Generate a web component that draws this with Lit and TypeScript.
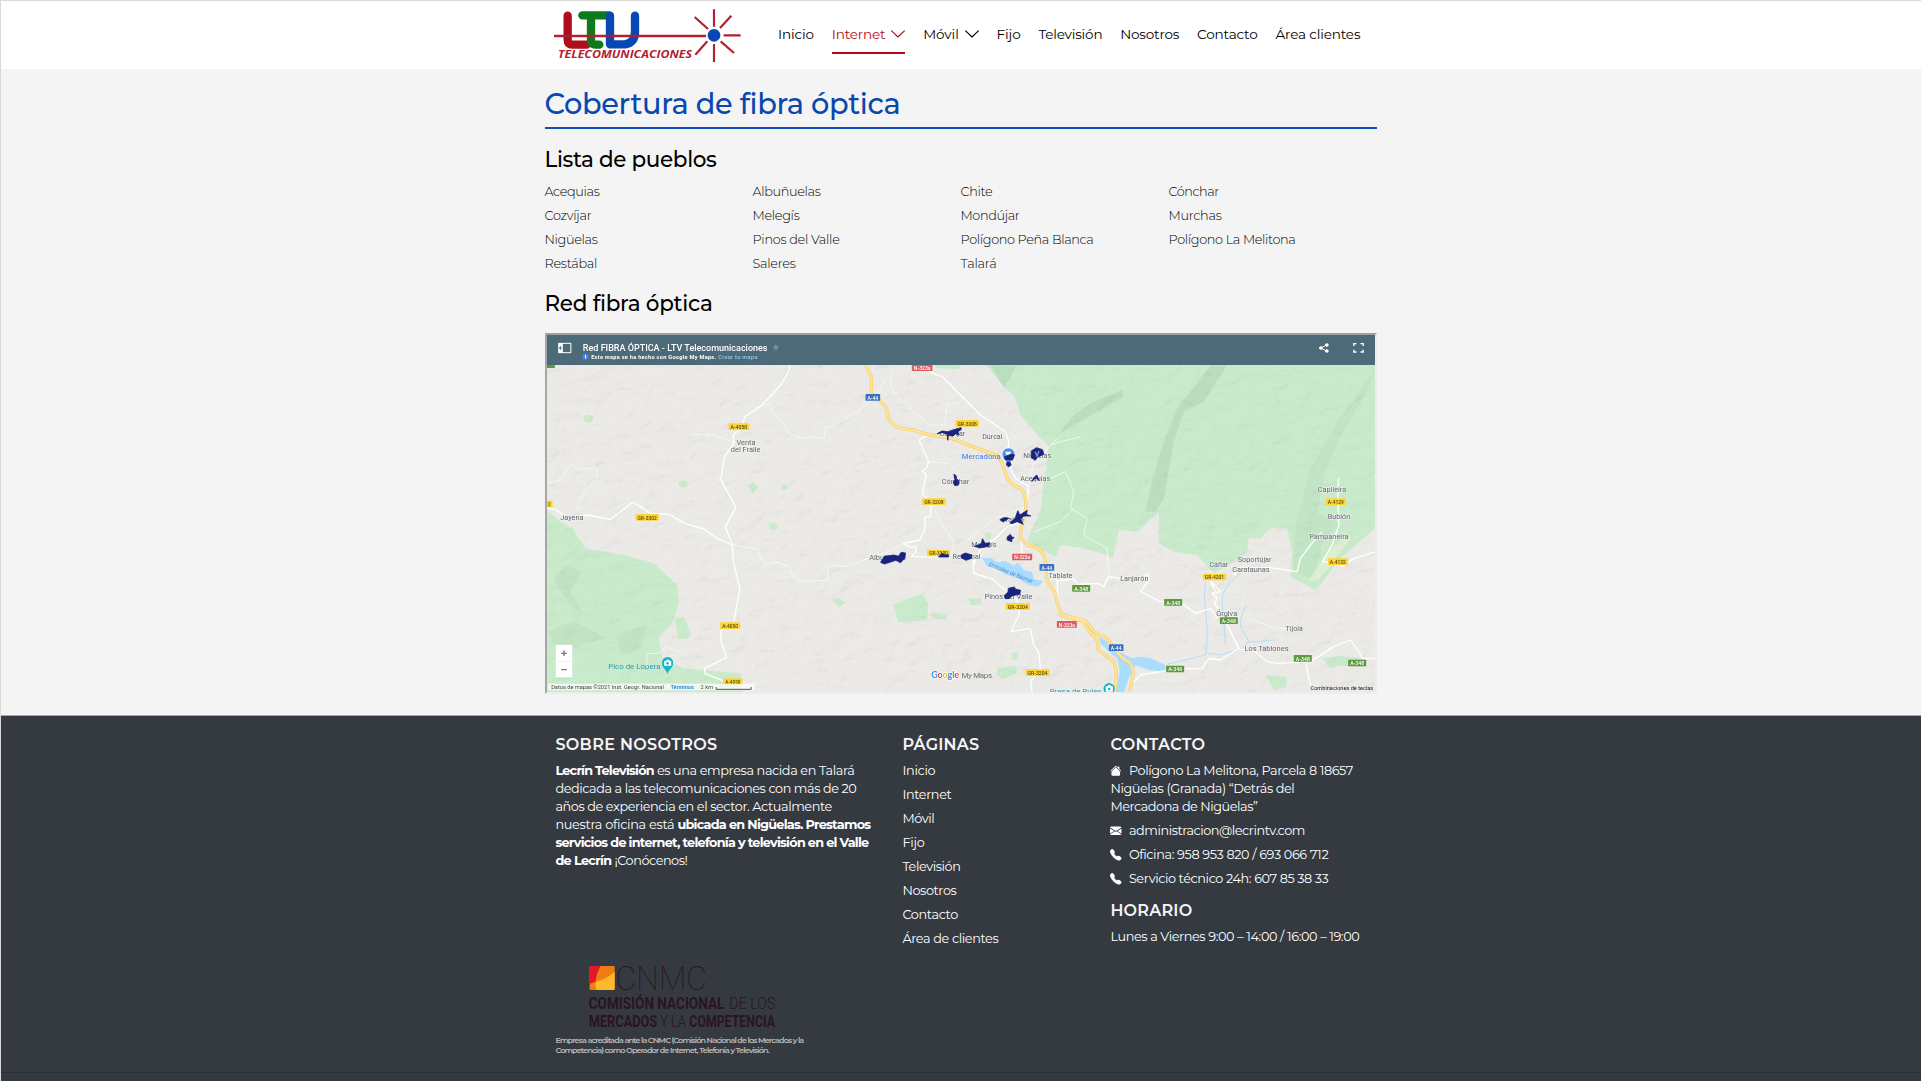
import { LitElement, html, svg, css } from "lit";
import { customElement, property } from "lit/decorators.js";

/** A run of text whose tracking is adjusted so that it spans `width` pixels. */
@customElement("ui-run")
class UiRun extends LitElement {
  @property({ type: Number }) width = 0;

  static styles = css`
    :host {
      display: inline-block;
      white-space: pre;
    }
    .run {
      display: inline-block;
    }
  `;

  firstUpdated() {
    const run = this.renderRoot.querySelector(".run") as HTMLElement;
    const natural = run.getBoundingClientRect().width;
    const count = (this.textContent ?? "").length;
    if (this.width && natural && count) {
      run.style.letterSpacing = `${(this.width - natural) / count}px`;
    }
  }

  render() {
    return html`<span class="run"><slot></slot></span>`;
  }
}

const run = (text: string, width: number) => html`<ui-run width=${width}>${text}</ui-run>`;

const chevron = html`<svg class="chevron" viewBox="0 0 14 8"><path d="M.6 .8 7 7 13.4 .8" fill="none" stroke="currentColor" stroke-width="1.1" stroke-linecap="round" stroke-linejoin="round" /></svg>`;

const house = html`<svg class="icon" viewBox="0 0 16 16" fill="currentColor"><path d="m8 3.293 6 6V13.500a1.500 1.500 0 0 1-1.500 1.500h-9A1.500 1.500 0 0 1 2 13.500V9.293l6-6zm5-.793V6l-2-2V2.500a.5.5 0 0 1 .5-.5h1a.5.5 0 0 1 .5.5z" /><path d="M7.293 1.500a1 1 0 0 1 1.414 0l6.647 6.646a.5.5 0 0 1-.708.708L8 2.207 1.354 8.854a.5.5 0 1 1-.708-.708L7.293 1.500z" /></svg>`;
const mail = html`<svg class="icon" viewBox="0 0 16 16" fill="currentColor"><path d="M.05 3.555A2 2 0 0 1 2 2h12a2 2 0 0 1 1.950 1.555L8 8.414.05 3.555zM0 4.697v7.104l5.803-3.558L0 4.697zM6.761 8.830l-6.570 4.027A2 2 0 0 0 2 14h12a2 2 0 0 0 1.808-1.144l-6.570-4.027L8 9.586l-1.239-.757zm3.436-.586L16 11.801V4.697l-5.803 3.546z" /></svg>`;
const phone = html`<svg class="icon" viewBox="0 0 16 16" fill="currentColor"><path d="M1.885.511a1.745 1.745 0 0 1 2.610.163L6.290 2.980c.329.423.445.974.315 1.494l-.547 2.190a.678.678 0 0 0 .178.643l2.457 2.457a.678.678 0 0 0 .644.178l2.189-.547a1.745 1.745 0 0 1 1.494.315l2.306 1.794c.829.645.905 1.870.163 2.611l-1.034 1.034c-.740.740-1.846 1.065-2.877.702a18.634 18.634 0 0 1-7.010-4.420 18.634 18.634 0 0 1-4.420-7.009c-.362-1.030-.037-2.137.703-2.877L1.885.511z" /></svg>`;

/* ---- map: drawn at three units per pixel ---- */

type Shield = [number, number, string, number?];
const shield = (fill: string, ink: string) => ([cx, cy, text, w = 62]: Shield) => svg`
  <rect x=${cx - w / 2} y=${cy - 10} width=${w} height="20" rx="2" fill=${fill} />
  <text x=${cx - w / 2 + 6} y=${cy + 6.5} textLength=${w - 12} lengthAdjust="spacingAndGlyphs" font-size="18" font-weight="500" fill=${ink}>${text}</text>`;

const yellowShields: Shield[] = [
  [595, 305, "A-4050"], [320, 577, "GR-3302", 70], [569, 902, "A-4050", 60], [577, 1070, "A-4050", 58],
  [1180, 530, "GR-3208", 70], [1194, 684, "GR-3300", 68], [1280, 295, "GR-3208", 70], [1432, 844, "GR-3204", 72],
  [1491, 1043, "GR-3204", 72], [2022, 756, "GR-4201", 70], [2386, 530, "A-4129", 60], [2392, 710, "A-4132", 60],
];
const greenShields: Shield[] = [
  [1622, 790, "A-348", 54], [1898, 832, "A-348", 54], [2065, 887, "A-348", 54],
  [1904, 1032, "A-346", 54], [2287, 1000, "A-348", 54], [2450, 1014, "A-348", 54],
];
const redShields: Shield[] = [[1145, 128, "N-323a"], [1445, 696, "N-323a", 60], [1579, 898, "N-323a", 60]];
const blueShields: Shield[] = [[997, 217, "A-44", 44], [1519, 727, "A-44", 44], [1727, 968, "A-44", 44]];

type Place = [number, number, number, string];
const places: Place[] = [
  [588, 645, 360, "Venta"], [571, 660, 382, "del Fraile"], [59, 129, 585, "Jayena"], [986, 1096, 704, "Albuñuelas"],
  [1204, 1286, 478, "Cónchar"], [1198, 1274, 332, "Cozvíjar"], [1236, 1320, 702, "Restábal"], [1325, 1386, 343, "Dúrcal"],
  [1448, 1532, 399, "Nigüelas"], [1439, 1529, 467, "Acequias"], [1292, 1368, 666, "Melegís"], [1392, 1450, 592, "Talará"],
  [1332, 1476, 822, "Pinos del Valle"], [1524, 1596, 758, "Tablate"], [1739, 1824, 769, "Lanjarón"],
  [2007, 2063, 725, "Cáñar"], [2092, 2193, 712, "Soportújar"], [2075, 2187, 740, "Carataunas"], [2027, 2090, 872, "Órgiva"],
  [2235, 2287, 917, "Tíjola"], [2112, 2244, 977, "Los Tablones"], [2332, 2417, 500, "Capileira"],
  [2362, 2429, 581, "Bubión"], [2306, 2424, 641, "Pampaneira"],
];

const minorRoads = [
  "M748 120C745 160 700 205 662 242L614 275 600 312 578 330 580 355 552 395 541 463 586 547 555 605 575 660 580 715 598 790 580 890",
  "M569 902 541 918 542 950 558 998 492 1030 494 1046 560 1072",
  "M20 550 45 553 80 578 140 570 210 583 278 531 330 565 385 568 440 598 490 612 530 640 575 660",
  "M1160 330 1136 345 1164 410 1158 430 1144 438 1157 448 1146 508 1172 530 1170 575 1152 578 1155 608 1138 645 1088 655 1112 668 1127 665 1126 680 1112 695 1215 697",
  "M1165 140 1205 155 1320 270 1395 320 1405 350 1400 410 1425 460 1465 485 1460 530 1440 570 1441 640 1447 700",
  "M1298 705 1300 745 1355 762 1395 795 1430 825 1436 870 1428 885 1412 920 1470 910 1478 955 1495 985 1500 1030 1470 1070 1475 1100",
  "M1300 720 1320 672 1365 640 1400 605 1440 592",
  "M1520 738 1550 765 1552 840M1550 768 1600 762 1612 778 1675 775 1690 785 1703 755 1740 760 1790 770 1822 745 1826 765 1800 800 1855 828 1930 840 1965 865 2010 850 2030 880",
  "M2010 770 2025 800 2012 770 2040 800 2015 805 2030 820 2022 835 2050 880 2095 970 2040 1005 2005 1000 1985 1030 1905 1032 1800 1050 1770 1080 1770 1100",
  "M2095 972 2145 980 2180 1010 2215 1015 2310 1010 2380 965 2430 945 2458 985 2465 1000 2510 1000M2297 1015 2305 1060 2312 1085",
  "M2394 460 2392 510 2395 600 2375 660 2345 710 2390 715 2405 725 2440 700 2508 680M2345 620 2310 660 2280 700 2270 740 2190 728 2098 728 2080 750",
];
const tracks = [
  "M20 475 60 465 90 418 115 432 170 430 172 455 140 490 105 555",
  "M662 242 690 235 695 262 725 290 745 325 780 340 815 335 850 340 855 310 890 295 950 260 1015 210 1030 165",
  "M575 660 650 672 672 720 705 710 745 725 760 760 790 770 860 765 865 720 920 725 1010 690 1060 675 1088 655",
  "M455 328 520 330 578 352M1060 140C1020 200 1100 230 1120 260L1170 300 1215 300 1218 240 1260 232",
  "M1165 410 1225 415 1260 450M1172 535 1200 590 1240 650 1238 690M318 1030 320 985 355 985 375 965 425 985",
  "M1532 360 1560 350 1620 335M1530 460 1575 440 1600 500 1590 550 1640 580 1630 630 1700 670 1705 750M1480 620 1560 590 1600 550",
  "M2127 880 2200 908 2250 912M1465 480 1478 420 1550 340M1260 660 1365 580 1465 540",
];
const motorway = "M975 120 993 155 993 205C1025 235 1042 240 1042 275 1060 325 1110 305 1140 322 1190 340 1230 330 1262 352L1370 392C1405 430 1380 470 1440 490 1480 535 1435 590 1440 640L1462 660C1515 672 1515 690 1518 745 1515 790 1545 780 1548 825L1562 870 1610 880C1650 880 1645 925 1690 935 1715 945 1730 1000 1765 1010 1790 1040 1770 1070 1768 1100";
const motorwayBranch = "M1562 872 1630 890C1640 930 1680 930 1672 975L1715 1005C1735 1030 1725 1070 1724 1100";

const zones = [
  "M1190 326 1205 318 1222 320 1246 312 1262 308 1262 314 1252 320 1256 330 1246 326 1236 334 1224 330 1222 346 1220 328 1206 323Z",
  "M1240 448 1247 452 1248 462 1254 466 1254 480 1243 482 1238 472 1243 464Z",
  "M1020 712 1032 694 1060 690 1074 694 1082 682 1095 684 1093 700 1080 713 1066 706 1032 717Z",
  "M1194 696 1204 685 1214 690 1224 689 1224 696Z",
  "M1262 690 1275 684 1294 690 1293 700 1276 706 1262 698Z",
  "M1302 664 1322 657 1326 641 1334 655 1348 653 1345 664 1318 669Z",
  "M1400 636 1410 628 1413 635 1421 638 1414 643 1414 650 1400 645Z",
  "M1378 584 1390 578 1405 580 1388 591Z",
  "M1408 594 1424 580 1432 557 1438 570 1460 556 1458 568 1471 573 1450 573 1440 582 1448 598 1430 590 1414 596Z",
  "M1391 812 1402 802 1404 790 1422 786 1424 792 1440 796 1438 808 1414 812 1406 821 1394 821Z",
  "M1392 396 1412 387 1422 390 1416 405 1394 404Z",
  "M1399 412 1408 411 1412 420 1404 426 1398 420Z",
  "M1474 470 1480 458 1489 450 1496 466 1487 460 1478 464Z",
  "M1473 398 1472 378 1488 368 1506 374 1510 388 1492 396 1484 406Z",
];

const massif = "M1338 120 1390 185 1420 210 1440 270 1500 340 1525 365 1510 470 1500 560 1470 620 1462 650 1545 695 1560 660 1620 668 1700 690 1718 700 1735 615 1790 620 1855 560 1855 655 1900 680 1970 690 2020 745 2090 705 2120 680 2125 640 2160 640 2190 610 2240 610 2255 680 2250 755 2325 795 2350 765 2400 700 2510 605 2510 120Z";
const westWoods = "M19 555 60 590 95 610 135 670 250 690 340 715 410 780 415 830 400 885 355 940 365 1000 430 1030 600 1045 605 1101 19 1101Z";

const mapCanvas = svg`
  <defs>
    <filter id="relief" x="0" y="0" width="100%" height="100%">
      <feTurbulence type="fractalNoise" baseFrequency="0.018 0.026" numOctaves="4" seed="8" />
      <feDiffuseLighting lighting-color="#fff" surfaceScale="9" diffuseConstant="1.200"><feDistantLight azimuth="225" elevation="58" /></feDiffuseLighting>
    </filter>
    <clipPath id="forests"><path d=${massif} /><path d=${westWoods} /></clipPath>
  </defs>
  <rect x="0" y="30" width="2520" height="1080" fill="#ebeae6" />
  <g fill="#c9ebcc">
    <path d=${massif} />
    <path d=${westWoods} />
    <path d="M404 880 430 876 450 925 445 940 412 942Z" />
    <ellipse cx="144" cy="281" rx="15" ry="12" /><ellipse cx="428" cy="477" rx="13" ry="11" />
    <path d="M620 482 636 472 655 486 636 502Z" /><circle cx="732" cy="486" r="9" /><ellipse cx="698" cy="604" rx="13" ry="11" />
    <path d="M872 822 895 820 915 834 895 846Z" /><path d="M1060 840 1100 822 1145 807 1163 835 1160 885 1120 888 1072 890Z" />
    <path d="M1172 865 1222 870 1215 885 1175 880ZM1284 820 1322 822 1318 838 1290 840ZM1370 1030 1425 1022 1430 1045 1390 1062 1368 1050ZM1333 625 1350 620 1352 640 1335 645ZM1412 985 1432 980 1432 1002 1415 1005Z" />
    <path d="M2345 1000 2400 992 2475 1005 2470 1025 2400 1022 2370 1030ZM2175 1050 2240 1055 2235 1085 2200 1095ZM1180 120 1262 120 1255 132 1190 130Z" />
  </g>
  <g clip-path="url(#forests)" fill="#a9cfae" opacity=".45">
    <path d="M1350 120 1425 122 1410 160 1388 188ZM1600 270 1650 235 1745 195 1750 215 1670 260 1550 330 1520 370Z" />
    <path d="M2010 122 2060 120 1990 230 1930 260 1900 350 1885 430 1870 520 1845 560 1815 560 1830 490 1860 380 1910 250Z" />
    <path d="M2508 130 2460 230 2390 350 2350 450 2330 560 2400 600 2350 640 2320 760 2260 740 2265 600 2310 430 2390 290Z" opacity=".55" />
    <path d="M40 760 75 720 120 740 90 800 130 870 80 830ZM20 920 100 890 200 940 120 960 60 1000ZM230 930 320 900 300 970 240 990Z" opacity=".5" />
  </g>
  <path d="M2400 640 2430 640 2340 760 2300 770 2350 700Z" fill="#e2efd2" opacity=".8" />
  <rect class="relief" x="19" y="30" width="2490" height="1075" filter="url(#relief)" />
  <g fill="#a9dcff">
    <path d="M1324 698 1350 700 1370 712 1395 708 1420 722 1432 712 1450 735 1475 742 1480 762 1508 768 1492 786 1465 780 1430 760 1395 748 1370 732 1340 724Z" />
    <path d="M1675 935 1700 950 1705 970 1735 980 1775 1000 1795 995 1830 1000 1875 1020 1875 1040 1825 1035 1785 1020 1765 1060 1750 1101 1725 1101 1738 1040 1730 1000 1700 975 1680 955Z" />
  </g>
  <g fill="none" stroke="#b5dcf6" stroke-width="3"><path d="M2118 840C2090 890 2100 910 2115 930L2125 950 2105 970 2040 990 2000 985M2100 745C2030 800 2045 820 2050 880L2055 960M1995 770C1985 850 2010 900 1995 990L1880 1018M2118 952 2200 945" /></g>
  <g class="track">${tracks.map((d) => svg`<path d=${d} />`)}</g>
  <g class="road">${minorRoads.map((d) => svg`<path d=${d} />`)}</g>
  <g fill="none" stroke-linejoin="round"><path d="${motorway}${motorwayBranch}" stroke="#f1cf72" stroke-width="10" /><path d="${motorway}${motorwayBranch}" stroke="#ffe499" stroke-width="6" /></g>

  <g class="places">${places.map(([x0, x1, y, name]) => svg`<text x=${x0} y=${y} textLength=${x1 - x0} lengthAdjust="spacingAndGlyphs">${name}</text>`)}</g>
  <text x="1343" y="722" class="water" textLength="142" transform="rotate(22 1343 722)">Embalse de Béznar</text>
  ${yellowShields.map(shield("#fbd53a", "#5d4a00"))}
  ${greenShields.map(shield("#5c9a3c", "#fff"))}
  ${redShields.map(shield("#df5c62", "#fff"))}
  ${blueShields.map(shield("#3c72c4", "#fff"))}
  <rect x="19" y="527" width="17" height="20" fill="#fbd53a" /><text x="21" y="543" font-size="17" fill="#6b5400">2</text>
  <rect x="19" y="120" width="24" height="9" fill="#5c9a3c" />

  <text x="1264" y="402" textLength="117" lengthAdjust="spacingAndGlyphs" font-size="24" fill="#3b80ee">Mercadona</text>
  <path d="M1404 370a18 18 0 0 1 18 18c0 14-14 18-18 34-4-16-18-20-18-34a18 18 0 0 1 18-18Z" fill="#4a8df6" /><path d="M1394 380h18l-3 10h-11z" fill="#fff" />
  <g fill="#1a237e">${zones.map((d) => svg`<path d=${d} stroke="#1a237e" stroke-width="2.500" stroke-linejoin="round" />`)}</g>
  <path d="M1484 380l6 14 5-16" fill="none" stroke="#8f93c2" stroke-width="4" />

  <text x="203" y="1031" textLength="157" lengthAdjust="spacingAndGlyphs" font-size="24" fill="#2f9dab">Pico de Lopera</text>
  <path d="M381 996a17 17 0 0 1 17 18c0 14-12 18-17 33-5-15-17-19-17-33a17 17 0 0 1 17-18Z" fill="#19b5cb" /><path d="M371 1008h5l3-4h6l3 4h4v14h-21z" fill="#fff" /><circle cx="381" cy="1015" r="4" fill="#19b5cb" />
  <text x="1528" y="1106" textLength="156" lengthAdjust="spacingAndGlyphs" font-size="24" fill="#2f9dab">Presa de Rules</text>
  <circle cx="1706" cy="1091" r="17" fill="#19b5cb" /><path d="M1696 1084h5l3-4h6l3 4h4v16h-21z" fill="#fff" /><circle cx="1706" cy="1092" r="4" fill="#19b5cb" />

  <rect x="19" y="30" width="2490" height="90" fill="#4d6a78" />
  <g><rect x="55" y="55" width="36" height="28" fill="none" stroke="#fff" stroke-width="3" /><rect x="54" y="54" width="13" height="30" fill="#fff" /><path d="M62 62v14l-7-7z" fill="#4d6a78" /></g>
  <text x="127" y="77" textLength="554" lengthAdjust="spacingAndGlyphs" font-size="27" font-weight="500" fill="#fff">Red FIBRA ÓPTICA - LTV Telecomunicaciones</text>
  <path d="m706 56 3 8h8l-6 5 2 8-7-5-7 5 2-8-6-5h8z" fill="#78909c" />
  <circle cx="135" cy="95" r="9" fill="#4285f4" /><rect x="133.500" y="93" width="3" height="7" fill="#fff" /><rect x="133.500" y="89" width="3" height="3" fill="#fff" />
  <text x="152" y="102" textLength="375" font-size="17" font-weight="700" fill="#fff">Este mapa se ha hecho con Google My Maps.</text>
  <text x="533" y="102" textLength="118" font-size="17" font-weight="500" fill="#8fc7f5">Crear tu mapa</text>
  <g fill="#fff" stroke="#fff" stroke-width="3"><path d="M2359 60 2340 69 2359 78" fill="none" /><circle cx="2359" cy="60" r="4" /><circle cx="2341" cy="69" r="4" /><circle cx="2359" cy="78" r="4" /></g>
  <path d="M2440 63v-7h8M2460 56h8v7M2468 74v7h-8M2448 81h-8v-7" fill="none" stroke="#fff" stroke-width="4" />

  <g><rect x="45" y="961" width="51" height="99" rx="3" fill="#000" opacity=".18" /><rect x="45" y="959" width="51" height="99" rx="3" fill="#fff" /><path d="M50 1009h41" stroke="#e6e6e6" stroke-width="2" /><path d="M62 985h17M70.500 976v17M62 1034h17" stroke="#777" stroke-width="4" /></g>
  <rect x="22" y="1076" width="622" height="20" fill="#fff" opacity=".72" />
  <text x="32" y="1092" textLength="338" font-size="17" fill="#444">Datos de mapas ©2021 Inst. Geogr. Nacional</text>
  <text x="390" y="1092" textLength="70" font-size="17" font-weight="500" fill="#1a73e8">Términos</text>
  <text x="480" y="1093" textLength="38" font-size="17" fill="#444">2 km</text>
  <path d="M527 1086v7h105v-7" fill="none" stroke="#555" stroke-width="3" />
  <text x="1172" y="1060" textLength="84" font-size="27" font-weight="700" font-family="Lato, sans-serif" stroke="#fff" stroke-width="4" paint-order="stroke"><tspan fill="#4285f4">G</tspan><tspan fill="#ea4335">o</tspan><tspan fill="#fbbc05">o</tspan><tspan fill="#4285f4">g</tspan><tspan fill="#34a853">l</tspan><tspan fill="#ea4335">e</tspan></text>
  <text x="1263" y="1060" textLength="92" font-size="24" fill="#757575">My Maps</text>
  <text x="2310" y="1096" textLength="188" font-size="17" fill="#222">Combinaciones de teclas</text>
`;

const logo = html`<svg class="logo" viewBox="42 24 564 165">
  <g fill="none" stroke-linecap="round" stroke-linejoin="round" stroke-width="25">
    <path d="M83 47V120Q83 134 97 134H140" stroke="#b00d1c" />
    <path d="M127 46H205M153 48V120Q153 134 167 134H178" stroke="#0e7a1c" />
    <path d="M210 47V133H255Q285 128 285 95V47" stroke="#0848b4" />
  </g>
  <g stroke="#b5202e" fill="none"><path d="M42 108H498M551 106H602" stroke-width="7" /><path d="M522 28V80M522 132V186M464 51 504 87M574 47 540 84M502 124 466 164M542 124 582 159" stroke-width="6.500" /></g>
  <path d="M83 104v8M210 104v8M285 104v8" stroke="#7a1d5c" stroke-width="25" opacity=".35" />
  <circle cx="522" cy="106" r="19" fill="#0848b4" />
  <text x="54" y="174" textLength="402" lengthAdjust="spacingAndGlyphs" font-family="Open Sans, sans-serif" font-style="italic" font-weight="700" font-size="34" fill="#b5202e">TELECOMUNICACIONES</text>
</svg>`;

const cnmc = html`<svg class="cnmc" viewBox="148 744 564 201">
  <rect x="150" y="753" width="75" height="72" rx="4" fill="#ee7d11" />
  <path d="M154 753H183Q168 780 168 800L150 806V757Q150 753 154 753Z" fill="#e2182a" />
  <path d="M225 770V821Q225 825 221 825H170Q166 812 168 800 205 790 225 770Z" fill="#fbb92b" />
  <g fill="#2a1420" font-family="Roboto, sans-serif">
    <text x="228" y="824" textLength="274" lengthAdjust="spacingAndGlyphs" font-size="99" font-weight="100">CNMC</text>
    <g font-size="48">
      <text x="147" y="882" textLength="407" lengthAdjust="spacingAndGlyphs" font-weight="700">COMISIÓN NACIONAL</text>
      <text x="568" y="882" textLength="140" lengthAdjust="spacingAndGlyphs" font-weight="300">DE LOS</text>
      <text x="147" y="935" textLength="206" lengthAdjust="spacingAndGlyphs" font-weight="700">MERCADOS</text>
      <text x="362" y="935" textLength="77" lengthAdjust="spacingAndGlyphs" font-weight="300">Y LA</text>
      <text x="449" y="935" textLength="257" lengthAdjust="spacingAndGlyphs" font-weight="700">COMPETENCIA</text>
    </g>
  </g>
</svg>`;

const towns: [string, number][] = [
  ["Acequias", 55], ["Albuñuelas", 68], ["Chite", 32], ["Cónchar", 50.5],
  ["Cozvíjar", 47], ["Melegís", 47], ["Mondújar", 59], ["Murchas", 53],
  ["Nigüelas", 53], ["Pinos del Valle", 87], ["Polígono Peña Blanca", 133], ["Polígono La Melitona", 127],
  ["Restábal", 52.5], ["Saleres", 43], ["Talará", 36],
];

const nav: { text: string; w: number; menu?: boolean; active?: boolean }[] = [
  { text: "Inicio", w: 36 }, { text: "Internet", w: 53.5, menu: true, active: true }, { text: "Móvil", w: 35.5, menu: true },
  { text: "Fijo", w: 24 }, { text: "Televisión", w: 64 }, { text: "Nosotros", w: 59 }, { text: "Contacto", w: 60.5 }, { text: "Área clientes", w: 85 },
];

const pages: [string, number][] = [
  ["Inicio", 33], ["Internet", 49], ["Móvil", 32], ["Fijo", 22], ["Televisión", 58], ["Nosotros", 54], ["Contacto", 55.5], ["Área de clientes", 96],
];

@customElement("app-root")
class AppRoot extends LitElement {
  static styles = css`
    :host {
      display: block;
      box-sizing: border-box;
      height: 1081px;
      overflow: hidden;
      background: #f4f4f4;
      border-top: 1px solid #dadada;
      border-left: 1px solid #dadada;
      font-family: Montserrat, Inter, "Open Sans", sans-serif;
      color: #000;
    }
    * { box-sizing: border-box; }
    svg { display: block; }
    .container { width: 833px; margin: 0 auto; padding-right: 1px; }
    header { height: 68px; background: #fff; }
    header .container { height: 100%; display: flex; padding: 7px 0 0 9px; }
    .logo { width: 188px; height: 55px; flex: none; }
    nav { display: flex; gap: 17.850px; margin-left: 36.500px; font-size: 13.600px; font-weight: 450; line-height: 18px; }
    .item { display: flex; gap: 6px; height: 36px; margin-top: 10px; padding-top: 7px; white-space: nowrap; }
    .active { color: #b5071c; border-bottom: 2px solid #b5071c; }
    .chevron { width: 14px; height: 8px; margin-top: 5px; }
    h1, h2, h3, p, ul { margin: 0; padding: 0; list-style: none; }
    h1 { margin-top: 18px; height: 42px; line-height: 34px; font-size: 28.800px; font-weight: 500; color: #0848b0; border-bottom: 2px solid #0b50b4; }
    h2 { line-height: 26px; font-size: 21.500px; font-weight: 500; margin-top: 17px; }
    .towns { display: grid; grid-template-columns: repeat(4, 208px); grid-auto-rows: 24px; margin-top: 8px; font-size: 12.800px; font-weight: 300; line-height: 24px; color: #000; }
    .towns + h2 { margin-top: 14px; }
    .frame { margin-top: 17px; height: 361px; border: 2px solid; border-color: #9f9f9f #ededed #ededed #a6a6a6; }
    .map { width: 828px; height: 357px; font-family: Roboto, sans-serif; }
    .relief { mix-blend-mode: multiply; opacity: 0.16; }
    .road path { fill: none; stroke: #fff; stroke-width: 4; stroke-linejoin: round; }
    .track path { fill: none; stroke: #f8f8f6; stroke-width: 2.500; stroke-linejoin: round; }
    .places text { font-size: 24px; fill: #5f6670; stroke: #f3f2ef; stroke-width: 3px; paint-order: stroke; }
    .water { font-size: 18px; fill: #5b93c9; }
    footer { margin-top: 21px; border-top: 1px solid #a4a6a8; background: #353a41; color: #fff; height: 366px; }
    .columns { display: grid; grid-template-columns: 347px 208px 1fr; padding: 19px 0 0 10.900px; height: 247px; font-size: 12.800px; line-height: 18px; font-weight: 450; }
    h3 { font-size: 16px; line-height: 20px; font-weight: 600; margin-bottom: 7px; color: #f5f5f5; }
    .pages h3 { margin-bottom: 4px; }
    .pages li { height: 24px; line-height: 24px; }
    b { font-weight: 700; }
    .contact li { margin-bottom: 6px; }
    .line { display: flex; align-items: center; gap: 7px; height: 18px; }
    .about .line { gap: 3px; }
    .icon { width: 11.500px; height: 11.500px; }
    .contact ul + h3 { margin: 13px 0 7px; }
    .accredit { padding-left: 10.900px; height: 109px; font-size: 8px; line-height: 10px; font-weight: 600; color: #b9bbbd; }
    .cnmc { width: 188px; height: 67px; margin: 0 0 5px 34px; overflow: visible; }
    .legal { border-top: 1px solid #2b2f33; background: #343a3f; height: 9px; }
  `;

  render() {
    return html`
      <header>
        <div class="container">
          ${logo}
          <nav>
            ${nav.map((n) => html`<a class="item ${n.active ? "active" : ""}">${run(n.text, n.w)}${n.menu ? chevron : ""}</a>`)}
          </nav>
        </div>
      </header>
      <main class="container">
        <h1>${run("Cobertura de fibra óptica", 356)}</h1>
        <h2>${run("Lista de pueblos", 172)}</h2>
        <div class="towns">${towns.map(([t, w]) => html`<div>${run(t, w)}</div>`)}</div>
        <h2>${run("Red fibra óptica", 168)}</h2>
        <div class="frame"><svg class="map" viewBox="19.500 30 2484 1071">${mapCanvas}</svg></div>
      </main>
      <footer>
        <div class="container columns">
          <section class="about">
            <h3>${run("SOBRE NOSOTROS", 162)}</h3>
            <div class="line"><b>${run("Lecrín Televisión", 98.5)}</b>${run("es una empresa nacida en Talará", 197.5)}</div>
            <div class="line">${run("dedicada a las telecomunicaciones con más de 20", 301)}</div>
            <div class="line">${run("años de experiencia en el sector. Actualmente", 276.5)}</div>
            <div class="line">${run("nuestra oficina está", 119)}<b>${run("ubicada en Nigüelas. Prestamos", 193)}</b></div>
            <div class="line"><b>${run("servicios de internet, telefonía y televisión en el Valle", 313)}</b></div>
            <div class="line"><b>${run("de Lecrín", 56)}</b>${run("¡Conócenos!", 73)}</div>
          </section>
          <section class="pages">
            <h3>${run("PÁGINAS", 77)}</h3>
            <ul>${pages.map(([t, w]) => html`<li>${run(t, w)}</li>`)}</ul>
          </section>
          <section class="contact">
            <h3>${run("CONTACTO", 95)}</h3>
            <ul>
              <li>
                <div class="line">${house}${run("Polígono La Melitona, Parcela 8 18657", 224)}</div>
                <div class="line">${run("Nigüelas (Granada) “Detrás del", 184)}</div>
                <div class="line">${run("Mercadona de Nigüelas”", 147)}</div>
              </li>
              <li class="line">${mail}${run("administracion@lecrintv.com", 176)}</li>
              <li class="line">${phone}${run("Oficina: 958 953 820 / 693 066 712", 199.5)}</li>
              <li class="line">${phone}${run("Servicio técnico 24h: 607 85 38 33", 199.5)}</li>
            </ul>
            <h3>${run("HORARIO", 82)}</h3>
            <p>${run("Lunes a Viernes 9:00 – 14:00 / 16:00 – 19:00", 249)}</p>
          </section>
        </div>
        <div class="container accredit">
          ${cnmc}
          <div>${run("Empresa acreditada ante la CNMC (Comisión Nacional de los Mercados y la", 248)}</div>
          <div>${run("Competencia) como Operador de Internet, Telefonía y Televisión.", 213.5)}</div>
        </div>
        <div class="legal"></div>
      </footer>
    `;
  }
}
